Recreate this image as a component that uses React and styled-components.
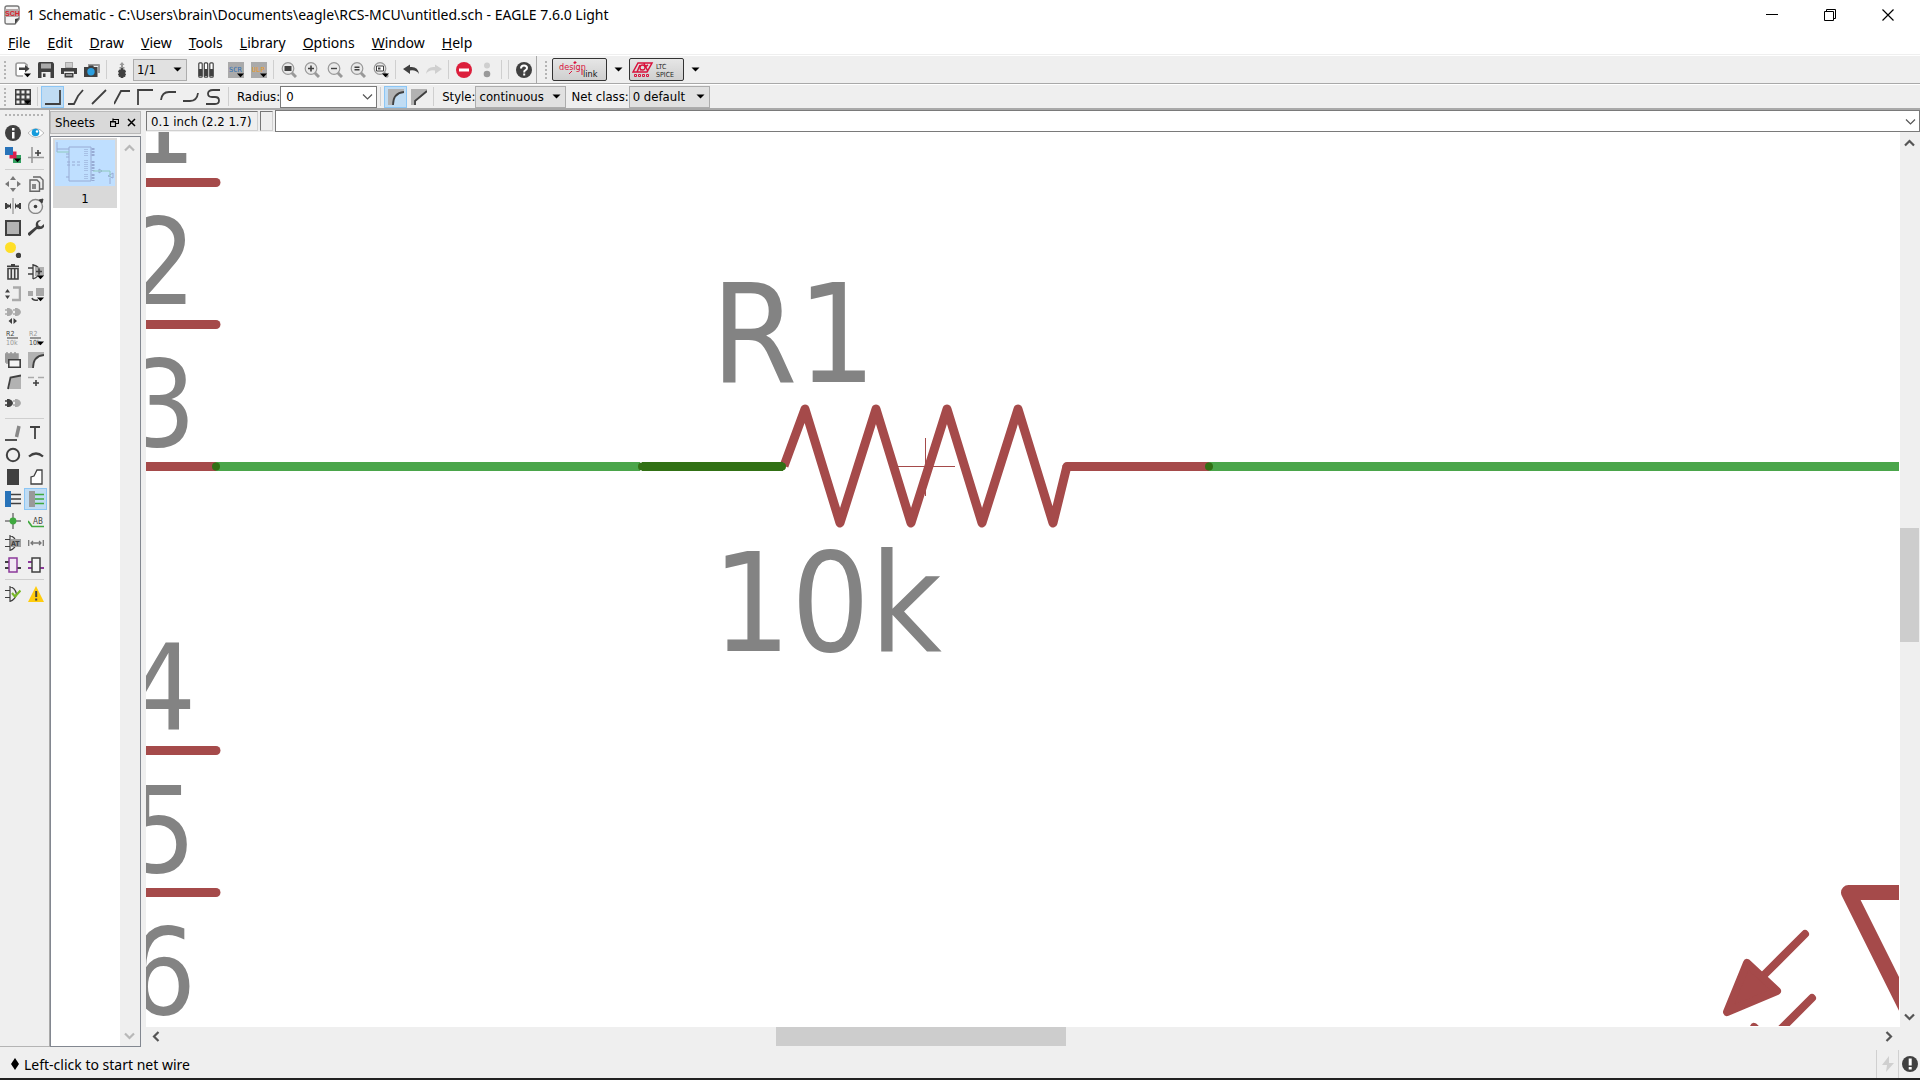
import React from "react";
import styled, { createGlobalStyle } from "styled-components";

const UI_FONT = `"Noto Sans", "Open Sans", sans-serif`;
const TOOL_FONT = `"DejaVu Sans Condensed", "DejaVu Sans", sans-serif`;
const INK = "#404040";
const MID = "#999999";
const RED = "#a54a4a";
const NET = "#4aa54a";
const PIN = "#317014";

const GlobalStyle = createGlobalStyle`
  *, *::before, *::after { box-sizing: border-box; }
  html, body, #root { height: 100%; }
  body { margin: 0; background: #efefef; color: #000; font-family: ${UI_FONT}; overflow: hidden; }
  button, input, select { font: inherit; color: inherit; margin: 0; }
`;

const Window = styled.div`
  display: flex;
  flex-direction: column;
  height: 100vh;
  background: #efefef;
`;

const TitleBar = styled.header`
  display: flex;
  align-items: center;
  height: 29px;
  padding-left: 4px;
  gap: 7px;
  background: #fff;
  font-size: 14px;
  flex: none;
`;

const TitleText = styled.h1`
  margin: 0;
  flex: 1;
  font-size: 14px;
  font-weight: 400;
  white-space: nowrap;
`;

const CaptionButtons = styled.div`
  display: flex;
  padding-right: 3px;
`;

const CaptionButton = styled.button`
  display: grid;
  place-items: center;
  width: 58px;
  height: 29px;
  padding: 0;
  border: 0;
  background: none;
`;

const MenuBar = styled.nav`
  display: flex;
  align-items: center;
  gap: 1px;
  height: 26px;
  background: #fff;
  border-bottom: 1px solid #efefef;
  flex: none;
`;

const MenuItem = styled.button`
  height: 25px;
  padding: 2px 8px 0;
  border: 0;
  background: none;
  font-size: 14px;
  line-height: 23px;
`;

const Toolbar = styled.div`
  display: flex;
  align-items: center;
  height: ${(p) => p.$height}px;
  border-top: 1px solid #fff;
  border-bottom: ${(p) => (p.$last ? 2 : 1)}px solid #a9a9a9;
  font-family: ${TOOL_FONT};
  font-size: 13px;
  flex: none;
`;

const Grip = styled.span`
  width: 11px;
  height: 20px;
  flex: none;
  background: radial-gradient(circle, #b4b4b4 1px, transparent 1px) 2px 0 / 6px 4px repeat-y;
`;

const Separator = styled.span`
  width: 7px;
  height: 19px;
  flex: none;
  background: linear-gradient(${(p) => (p.$blank ? "transparent, transparent" : "#cfcfcf, #cfcfcf")}) center / 1px 100% no-repeat;
`;

const BarEdge = styled.span`
  width: 1px;
  height: 100%;
  background: #a9a9a9;
  margin: 0 4px 0 1px;
`;

const ToolButton = styled.button`
  display: grid;
  place-items: center;
  width: 23px;
  height: 22px;
  padding: 0;
  flex: none;
  border: 1px solid ${(p) => (p.$on ? "#8cc6f5" : "transparent")};
  background: ${(p) => (p.$on ? "#c0dcf3" : "transparent")};
`;

const FieldLabel = styled.label`
  padding-left: 5px;
  white-space: nowrap;
`;

const SelectBox = styled.span`
  display: grid;
  align-items: center;
  width: ${(p) => p.$width}px;
  height: 22px;
  flex: none;
  > * { grid-area: 1 / 1; }
  > svg { justify-self: end; margin-right: 5px; pointer-events: none; }
`;

const Select = styled.select`
  appearance: none;
  width: 100%;
  height: 22px;
  padding: 0 3px;
  border: 1px solid #adadad;
  border-radius: 0;
  background: #e1e1e1;
`;

const ComboBox = styled.span`
  display: flex;
  align-items: center;
  width: ${(p) => (p.$width ? p.$width + "px" : "auto")};
  flex: ${(p) => (p.$width ? "none" : 1)};
  height: 22px;
  border: 1px solid #7a7a7a;
  background: #fff;
`;

const ComboInput = styled.input`
  flex: 1;
  min-width: 0;
  height: 20px;
  padding: 0 5px;
  border: 0;
  background: none;
  outline: 0;
`;

const ComboArrow = styled.button`
  display: grid;
  place-items: center;
  width: 17px;
  height: 20px;
  padding: 0;
  border: 0;
  background: none;
`;

const BrandButton = styled.button`
  display: grid;
  place-items: center;
  width: 55px;
  height: 23px;
  padding: 0;
  border: 1px solid #333;
  border-radius: 2px;
  background: linear-gradient(#e6e6e6, #cfcfcf);
`;

const BrandArrow = styled.button`
  display: grid;
  place-items: center;
  width: 22px;
  height: 22px;
  padding: 0;
  border: 0;
  background: none;
`;

const Workspace = styled.div`
  display: flex;
  flex: 1;
  min-height: 0;
`;

const Palette = styled.aside`
  width: 50px;
  flex: none;
  border-right: 1px solid #a9a9a9;
  border-bottom: 1px solid #b4b4b4;
  padding: 3px 1px 0;
`;

const PaletteGrip = styled.div`
  height: 9px;
  margin: 0 3px;
  background: radial-gradient(circle, #b4b4b4 1px, transparent 1px) 0 0 / 4px 4px repeat-x;
`;

const PaletteGroup = styled.div`
  display: grid;
  grid-template-columns: 23px 23px;
  grid-auto-rows: 22px;
`;

const PaletteRule = styled.hr`
  height: 1px;
  margin: 3px 4px;
  border: 0;
  background: #cfcfcf;
`;

const Dock = styled.section`
  display: flex;
  flex-direction: column;
  gap: 2px;
  width: 91px;
  margin-right: 5px;
  padding-top: 1px;
  flex: none;
`;

const DockHeader = styled.header`
  display: flex;
  align-items: center;
  height: 23px;
  padding: 0 4px;
  border: 1px solid #b9b9b9;
  background: #d9d9d9;
  font-family: ${TOOL_FONT};
  font-size: 13px;
`;

const DockTitle = styled.h2`
  flex: 1;
  margin: 0;
  font-size: 13px;
  font-weight: 400;
`;

const DockButton = styled.button`
  display: grid;
  place-items: center;
  width: 17px;
  height: 17px;
  padding: 0;
  border: 0;
  background: none;
  &:last-child { margin-right: -4px; }
`;

const SheetPane = styled.div`
  display: flex;
  flex: 1;
  min-height: 0;
  border: 1px solid #828790;
  background: #fff;
`;

const SheetList = styled.ul`
  flex: 1;
  margin: 0;
  padding: 1px 2px;
  list-style: none;
`;

const SheetItem = styled.li`
  display: flex;
  flex-direction: column;
  align-items: center;
  gap: 4px;
  width: 64px;
  height: 70px;
  padding-top: 2px;
  background: #d9d9d9;
  font-family: ${TOOL_FONT};
  font-size: 13px;
  line-height: 18px;
`;

const ScrollTrack = styled.div`
  display: flex;
  flex-direction: ${(p) => (p.$across ? "row" : "column")};
  justify-content: space-between;
  ${(p) => (p.$across ? "height: 20px;" : "width: 20px;")}
  padding: ${(p) => (p.$across ? "0 1px" : "2px 0")};
  flex: none;
  background: #efefef;
`;

const ScrollArrow = styled.button`
  display: grid;
  place-items: center;
  width: 18px;
  height: 18px;
  padding: 0;
  border: 0;
  background: none;
  flex: none;
`;

const ScrollSpace = styled.div`
  flex: ${(p) => p.$grow};
`;

const ScrollThumb = styled.div`
  flex: ${(p) => p.$grow};
  background: #cdcdcd;
  margin: ${(p) => (p.$across ? "0 0 1px" : "0 1px 0 0")};
`;

const Editor = styled.main`
  display: flex;
  flex-direction: column;
  flex: 1;
  min-width: 0;
`;

const CommandRow = styled.div`
  display: flex;
  height: 22px;
  gap: 2px;
  flex: none;
  font-family: ${TOOL_FONT};
  font-size: 13px;
`;

const Readout = styled.output`
  width: ${(p) => p.$width}px;
  height: 20px;
  margin-top: 1px;
  padding-left: 4px;
  border: 1px solid #d0d0d0;
  border-top: 1px solid #777;
  border-left: 1px solid #777;
  line-height: 19px;
  white-space: nowrap;
`;

const CanvasArea = styled.div`
  display: flex;
  flex: 1;
  min-height: 0;
`;

const Drawing = styled.svg`
  flex: 1;
  min-width: 0;
  height: 100%;
  border: solid #fff;
  border-width: 0 1px 1px 0;
  background: #fff;
  overflow: hidden;
`;

const StatusBar = styled.footer`
  display: flex;
  align-items: center;
  height: 31px;
  padding: 3px 0 0 9px;
  flex: none;
  font-size: 14px;
`;

const StatusText = styled.span`
  flex: 1;
  display: flex;
  align-items: center;
  gap: 3px;
`;

const StatusCell = styled.span`
  display: grid;
  place-items: center;
  width: 22px;
  height: 28px;
  border-left: 1px solid #d0d0d0;
`;

const BottomEdge = styled.div`
  height: 2px;
  background: #222;
  flex: none;
`;

const Drop = () => <path d="M9 11.500h7l-3.500 3.800z" fill="#000" />;
const s = { fill: "none", stroke: INK, strokeWidth: 1.8 };

const Lens = ({ children }) => (
  <>
    <path d="M10.500 10.500l4.500 4.500" stroke={MID} strokeWidth="3" />
    <circle cx="7" cy="6.500" r="5.800" fill="#e9e9e9" stroke={MID} strokeWidth="1.200" />
    {children}
  </>
);
const Gate = ({ x = 0, fill = INK, y = 8 }) => (
  <path transform={`translate(${x} ${y - 4})`} d="M2 0h2q3.500 1 4 4q-.5 3-4 4h-2zM0 1.200h2v1.600H0zM0 5.200h2v1.600H0z" fill={fill} />
);

const icons = {
  open: <><path d="M12 5V3L9.500 1H3Q1 1 1 3v9q0 2 2 2h5" fill="#fff" stroke={MID} strokeWidth="1.600" /><path d="M4 5.500h6V3l4.500 3.800L10 10.500V8H4z" fill={INK} /><Drop /></>,
  save: <><path d="M0 1.500Q0 0 1.500 0h13L16 1.500V16H0z" fill={INK} /><path d="M3 1.500h10v5H3z" fill="#aaa" /><path d="M3.500 10h9v6h-9z" fill="#eee" /><path d="M5 11.500h2.500V15H5z" fill={INK} /></>,
  print: <><path d="M4 0h8v6H4z" fill="#aaa" /><path d="M5 2h6M5 4h6" stroke="#eee" /><path d="M0 6h16v6h-3V9.500H3V12H0z" fill={INK} /><path d="M3.500 11h9v4.500h-9z" fill={INK} /><path d="M5 13h6" stroke="#eee" /></>,
  camera: <><path d="M4 2h11q1 0 1 1v8h-2V4H4z" fill={MID} /><path d="M0 5h4l1-1.500h4L10 5h3.500v10H0z" fill={INK} /><circle cx="7" cy="9.800" r="3.700" fill="#2b9fe0" /></>,
  sheetNav: <><path d="M5.500 3h5L8 0zM7 3h2v3H7zM5.500 5h5v1.500h-5z" fill={MID} /><path d="M5 8h6v6.500H5zM7 6.500h2V16H7zM4 9.500h8M4 12.500h8" fill={INK} stroke={INK} strokeWidth=".8" /></>,
  tubes: <>{[0.8, 6.3, 11.8].map((x) => <g key={x}><rect x={x} y=".8" width="3.400" height="14.400" rx="1" fill="#fff" stroke={INK} strokeWidth="1.200" /><path d={`M${x} 7h3.400v7H${x}z`} fill={INK} /></g>)}</>,
  scr: <><path d="M0 0h16v16H0z" fill="#aaa" /><text x="1" y="10" fontSize="7" fontFamily="DejaVu Sans Mono" fill="#2d6fb4">SCR</text><Drop /></>,
  ulp: <><path d="M0 0h16v16H0z" fill="#aaa" /><text x="1" y="10" fontSize="7" fontFamily="DejaVu Sans Mono" fill="#ef9a20">ULP</text><Drop /></>,
  zoomFit: <Lens><path d="M3.500 4h7v5h-7z" fill={INK} /></Lens>,
  zoomIn: <Lens><path d="M4 6.500h6M7 3.500v6" stroke={INK} strokeWidth="1.600" /></Lens>,
  zoomOut: <Lens><path d="M4 6.500h6" stroke={INK} strokeWidth="1.400" /></Lens>,
  redraw: <Lens><path d="M4.500 5.200h5M4.500 7.800h5" stroke={INK} strokeWidth="1.400" /></Lens>,
  zoomSelect: <><Lens><path d="M3.500 4h7v5h-7z" fill="#fff" stroke={INK} /><path d="M5 5.500h2.500v2H5z" fill={INK} /></Lens><Drop /></>,
  undo: <path d="M0 7l7-4.500V5q8-1 9 7q-3-4.500-9-3.500V12z" fill={INK} />,
  redo: <path d="M16 7L9 2.500V5Q1 4 0 12q3-4.500 9-3.500V12z" fill="#cfcfcf" />,
  stop: <><circle cx="8" cy="8" r="8" fill="#dc1f3c" /><path d="M3 6.500h10v3H3z" fill="#fff" /></>,
  go: <><circle cx="8" cy="3.500" r="3" fill="#cfcfcf" /><circle cx="8" cy="12" r="3.300" fill="#999" /></>,
  help: <><circle cx="8" cy="8" r="8" fill={INK} /><path d="M5 6.500q0-3 3-3t3 2.500q0 1.500-1.500 2.200T8.200 10.500" fill="none" stroke="#fff" strokeWidth="2" /><path d="M7.200 11.500h2v2h-2z" fill="#fff" /></>,
  grid: <><path d="M0 0h16v16H0z" fill={INK} /><path d="M1.500 1.500h3v3h-3zM6.500 1.500h3v3h-3zM11.500 1.500h3v3h-3zM1.500 6.500h3v3h-3zM6.500 6.500h3v3h-3zM11.500 6.500h3v3h-3zM1.500 11.500h3v3h-3zM6.500 11.500h3v3h-3z" fill="#eee" /><Drop /></>,
  bend0: <path {...s} d="M0 15h15V1" />,
  bend1: <path {...s} d="M0 15h6L10 7l5-6" />,
  bend2: <path {...s} d="M1 15L15 1" />,
  bend3: <path {...s} d="M0 15L7 2h9" />,
  bend4: <path {...s} d="M1 16V1h15" />,
  bend5: <path {...s} d="M1 11Q2 3 9 3h7" />,
  bend6: <path {...s} d="M0 12h7q7 0 8-8" />,
  bend7: <path {...s} d="M14 1H7Q2 1 2 4.500T6 8h3q4 0 4 3.500T9 15H0" />,
  miterRound: <><path d="M0 0h16v3Q5 4 4 16H0z" fill="#b2b2b2" /><path {...s} d="M5 16Q5 4 16 3" /></>,
  miterCut: <><path d="M0 0h16v3L5 12v4H0z" fill="#b2b2b2" /><path {...s} d="M4 16v-4L16 2" /></>,
  info: <><circle cx="8" cy="8" r="8" fill={INK} /><path d="M7 7h2.500v6.500H7zM7 3h2.500v2.500H7z" fill="#fff" /></>,
  show: <><path d="M0 8q8-9 16 0q-8 9-16 0z" fill="#fff" stroke="#bbb" /><circle cx="7.500" cy="7.500" r="3.800" fill="#149bdc" /><circle cx="9" cy="6.500" r="1.200" fill="#fff" /></>,
  layers: <><path d="M8 8h8v8H8z" fill="#32a060" /><path d="M4.500 4.500h7v7h-7z" fill="#dc1f50" /><path d="M0 0h8v8H0z" fill="#2873b9" /><Drop /></>,
  mark: <><path d="M4 0v16M0 10.500h16" stroke={MID} strokeWidth="1.600" /><path d="M7 6h6M10 3v6" stroke={INK} strokeWidth="1.600" /></>,
  move: <path d="M8 0l3 4H5zM8 16l3-4H5zM0 8l4-3v6zM16 8l-4-3v6z" fill="#777" />,
  copy: <><path d="M5 1h7l3 3v9h-3M2 4h7l2.500 2.500V15.300H2z" fill="#eee" stroke="#666" strokeWidth="1.400" /><path d="M4 8h4v5H4z" fill="#888" /></>,
  mirror: <><path d="M8 0v16" stroke={MID} strokeWidth="1.300" /><path d="M0 5h2v1l3 1V5.500h1v5H5V9l-3 1v1H0zM16 5h-2v1l-3 1V5.500h-1v5h1V9l3 1v1h2z" fill={INK} /></>,
  rotate: <><circle cx="7.500" cy="8.500" r="7" fill="none" stroke="#888" strokeWidth="1.400" /><circle cx="7.500" cy="8.500" r="1.800" fill={INK} /><path d="M11 2l4-1-1 4z" fill={INK} stroke={INK} /></>,
  group: <path d="M1 1h14v14H1z" fill="#b2b2b2" stroke={INK} strokeWidth="2" />,
  change: <path d="M16 4l-3 2.500-2.500-1L10 3l3-3Q9 0 8 3q-.5 2 0 3.500L0 13q-.5 2 1.500 3L9 9q5 1 7-2z" fill={INK} />,
  paste: <><circle cx="5.500" cy="5.500" r="5.500" fill="#ffdf28" /><circle cx="13.500" cy="13.500" r="2.700" fill={INK} /></>,
  trash: <><path d="M2 3V1.500h4V0h4v1.500h4V3z" fill={INK} /><path d="M3 4.500h10V15H3zM6.300 5v10M9.700 5v10" fill="#eee" stroke={INK} strokeWidth="1.600" /></>,
  add: <><path d="M0 4h5M0 10h5M5 0v15M5 1q6 1 7 6.500Q11 13 5 15" fill="none" stroke={INK} strokeWidth="1.300" /><path d="M7 3h9v9H7z" fill="#a0a0a0" opacity=".8" /><path d="M8 7.500h6M11 4.500v6" stroke={INK} strokeWidth="1.500" /><Drop /></>,
  pinswap: <><path d="M0 6.500L2.500 3 5 6.500zM0 9.500L2.500 13 5 9.500z" fill={INK} /><path d="M8 1.500h7V14H7" fill="none" stroke="#aaa" strokeWidth="2.500" /></>,
  gateswap: <><path d="M0 5h5v5H0zM8 2h8v8H8z" fill="#a8a8a8" /><path d="M4 12q1 3 6 2" fill="none" stroke={INK} strokeWidth="1.500" /><Drop /></>,
  replace: <><Gate fill="#aaa" y={4} /><Gate x={8} fill="#aaa" y={4} /><path d="M3.500 13L7 10v6zM12 13L8.500 10v6z" fill={INK} /></>,
  name: <><text x="1" y="6" fontSize="7" fontFamily="DejaVu Sans Condensed" fill={INK}>R2</text><path d="M2 8h11" stroke="#777" strokeWidth="1.500" /><text x="1" y="15" fontSize="7" fontFamily="DejaVu Sans Condensed" fill="#999">10k</text></>,
  value: <><text x="1" y="6" fontSize="7" fontFamily="DejaVu Sans Condensed" fill="#999">R2</text><path d="M2 8h11" stroke="#777" strokeWidth="1.500" /><text x="1" y="15" fontSize="7" fontFamily="DejaVu Sans Condensed" fill={INK}>10k</text><Drop /></>,
  smash: <><path d="M0 2h13v8H0zM2 0v12M6 0v12M10 0v12" fill="#999" stroke="#999" strokeWidth="1.500" /><path d="M3.800 7.800h11.400v7.400H3.800z" fill="#f4f4f4" stroke={INK} strokeWidth="1.600" /></>,
  miter: <><path d="M0 0h16v3Q5 4 4 16H0z" fill="#b2b2b2" /><path {...s} d="M5 16Q5 4 16 3" /></>,
  split: <><path d="M4 15L6 4l10-3v14z" fill="#b2b2b2" /><path {...s} d="M3 15L5.500 3.500 16 1.500" /></>,
  invoke: <><path d="M0 3.500h6M10 3.500h6" stroke="#aaa" strokeWidth="1.400" /><path d="M5 9h6M8 6v6" stroke={INK} strokeWidth="1.600" /></>,
  gates: <><Gate y={7} /><Gate x={8} fill="#aaa" y={7} /></>,
  wire: <><path d="M0 15h12" stroke={INK} strokeWidth="1.800" /><path d="M14 1l-2.500 11" stroke="#888" strokeWidth="3.500" /></>,
  text: <path d="M2 2h10M7 2v12" fill="none" stroke={INK} strokeWidth="1.800" />,
  circle: <circle cx="8" cy="8" r="6.200" {...s} strokeWidth="2" />,
  arc: <path {...s} strokeWidth="2.300" d="M1 9.500q7-6 14 0" />,
  rect: <path d="M2 0h12v16H2z" fill={INK} />,
  polygon: <path d="M3 15V8l3-1 3-6h5v14z" fill="#fff" stroke={INK} strokeWidth="1.300" />,
  bus: <><path d="M0 0h6v16H0z" fill="#2873b9" /><path d="M6 3.500h10M6 8h10M6 12.500h10" stroke={INK} strokeWidth="1.500" /></>,
  net: <><path d="M1 0h6v16H1z" fill="#999" /><path d="M7 3.500h9M7 8h9M7 12.500h9" stroke="#3fa93f" strokeWidth="1.700" /></>,
  junction: <><path d="M0 8h16M8 0v16" stroke="#777" strokeWidth="1.500" /><circle cx="8" cy="8" r="3.400" fill="#3fa93f" /></>,
  label: <><path d="M0 8l4 5.500h12" fill="none" stroke="#3fa93f" strokeWidth="1.700" /><text x="5" y="10.500" fontSize="8" fontFamily="DejaVu Sans Condensed" fill={INK}>AB</text></>,
  attribute: <><path d="M0 4.500h5M0 11.500h5M5 0v16M5 .7q5 1 6.500 7.300Q10 14 5 15.300" fill="none" stroke={INK} strokeWidth="1.200" /><path d="M6 4h10v8H6z" fill="#a0a0a0" /><text x="6" y="11" fontSize="7" fontFamily="DejaVu Sans Condensed" fontWeight="700" fill={INK}>AT</text></>,
  dimension: <path d="M.7 5v6M15.300 5v6M3 8h10M5 6L3 8l2 2M11 6l2 2-2 2" fill="none" stroke="#777" strokeWidth="1.300" />,
  module: <><path d="M0 5h4M0 11h4M12 11h4" stroke={INK} strokeWidth="1.800" /><path d="M4 1h8v14H4z" fill="#f2e8f4" stroke="#8c3a9a" strokeWidth="1.500" /></>,
  port: <><path d="M0 5h4M0 11h4M12 11h4" stroke="#8c3a9a" strokeWidth="1.800" /><path d="M4 1h8v14H4z" fill="#f4f4f4" stroke={INK} strokeWidth="1.500" /></>,
  erc: <><path d="M0 4.500h5M0 11.500h5M5 0v16M5 .7q5 1 6.500 7.300Q10 14 5 15.300" fill="none" stroke={INK} strokeWidth="1.200" /><path d="M7 7l3 3.500 5.500-6" fill="none" stroke="#79b829" strokeWidth="2.200" /></>,
  errors: <><path d="M8 0l8 16H0z" fill="#ffcc0d" /><path d="M7.200 5h2v6h-2zM7.200 12.500h2v2h-2z" fill={INK} /></>,
  bolt: <path d="M9 0L2 9h5l-1 7 8-9H9z" fill="#cfcfcf" />,
  alert: <><circle cx="8" cy="8" r="8" fill={INK} /><path d="M6.700 2.500h3v7h-3zM6.700 11h3v2.500h-3z" fill="#fff" /></>,
};

const Icon = ({ name }) => (
  <svg width="16" height="16" viewBox="0 0 16 16" aria-hidden="true">{icons[name]}</svg>
);
const Tool = ({ name, on }) => (
  <ToolButton type="button" aria-label={name} $on={on}><Icon name={name} /></ToolButton>
);
const Caret = () => (
  <svg width="9" height="5" viewBox="0 0 9 5" aria-hidden="true"><path d="M.500.500h8l-4 4z" fill="#000" /></svg>
);

const turns = { down: 0, left: 90, up: 180, right: 270 };
const Chevron = ({ to = "down", color = "#555", weight = 2.2 }) => (
  <svg width="11" height="11" viewBox="0 0 11 11" aria-hidden="true">
    <path transform={`rotate(${turns[to]} 5.500 5.500)`} d="M1 3.500l4.500 4.500L10 3.500" fill="none" stroke={color} strokeWidth={weight} />
  </svg>
);

const DropDown = ({ id, width, value, label }) => (
  <SelectBox $width={width}>
    <Select id={id} aria-label={label} defaultValue={value}><option>{value}</option></Select>
    <Caret />
  </SelectBox>
);

const menus = ["File", "Edit", "Draw", "View", "Tools", "Library", "Options", "Window", "Help"];
const actionGroups = [
  ["scr", "ulp"],
  ["zoomFit", "zoomIn", "zoomOut", "redraw", "zoomSelect"],
  ["undo", "redo"],
  ["stop", "go"],
];
const bends = ["bend0", "bend1", "bend2", "bend3", "bend4", "bend5", "bend6", "bend7"];
const paletteGroups = [
  ["info", "show", "layers", "mark"],
  ["move", "copy", "mirror", "rotate", "group", "change", "paste", null, "trash", "add", "pinswap", "gateswap",
    "replace", null, "name", "value", "smash", "miter", "split", "invoke", "gates", null],
  ["wire", "text", "circle", "arc", "rect", "polygon", "bus", "net", "junction", "label", "attribute", "dimension", "module", "port"],
  ["erc", "errors"],
];
const pinNumbers = [["1", 163], ["2", 304], ["3", 446], ["4", 730], ["5", 872], ["6", 1014]];
const pinLines = [182, 324, 750, 892];

const LedArrow = ({ x, y }) => (
  <g transform={`translate(${x} ${y})`} stroke={RED} strokeWidth="8" strokeLinecap="round" strokeLinejoin="round">
    <path d="M1805 934L1764 975" />
    <path d="M1747 963L1777 991L1727 1012Z" fill={RED} />
  </g>
);

const Schematic = () => (
  <Drawing role="img" aria-label="Schematic sheet 1">
    <g transform="translate(-146 -132)" fill="none">
      <g fill="#838383" fontFamily={TOOL_FONT}>
        <g fontSize="119">
          {pinNumbers.map(([n, y]) => <text key={n} x="128" y={y}>{n}</text>)}
        </g>
        <g fontSize="138">
          <text x="711" y="382">R1</text>
          <text x="712" y="651">10k</text>
        </g>
      </g>
      <g stroke={RED} strokeWidth="9" strokeLinecap="round">
        {pinLines.map((y) => <path key={y} d={`M130 ${y}.500H216`} />)}
        <path d="M130 466.500H216M1067 466.500H1209" />
      </g>
      <path d="M784 466L805 409L840 523L876 409L911 523L947 409L982 523L1018 409L1053 523L1067 466" stroke={RED} strokeWidth="9" strokeLinejoin="round" />
      <path d="M216 466.500H640M1209 466.500H2400" stroke={NET} strokeWidth="9" />
      <path d="M642 466.500H782M216 466.500h.01M1209 466.500h.01" stroke={PIN} strokeWidth="8" strokeLinecap="round" />
      <path d="M642 466.500H783" stroke={PIN} strokeWidth="9" />
      <path d="M898 466.500H955M925.500 438V496" stroke={RED} />
      <path d="M2000 892.500H1848.500L1920 1036" stroke={RED} strokeWidth="15" strokeLinejoin="round" />
      <LedArrow x={0} y={0} />
      <LedArrow x={7} y={64} />
    </g>
  </Drawing>
);

const SheetThumb = () => (
  <svg width="60" height="46" viewBox="0 0 60 46" aria-hidden="true">
    <path d="M0 0h60v46H0z" fill="#bfdfff" />
    <g fill="none" stroke="#98abd4">
      <path d="M14 7h22v34H14zM2 2v10M2 9h12M11 14h3M11 17h3M11 37h3" />
      <path d="M12 22h14M12 25h14" strokeDasharray="3 2" />
      <path d="M38 8v8M38 21v10M38 34v7" strokeWidth="3" strokeDasharray="2 1" />
      <path d="M31 9v8M31 20v11M31 34v6" strokeWidth="4" strokeDasharray="1 1" opacity=".6" />
      <path d="M44 29l3 2-3 2zM53 36l5-3v5zM55 38v6" />
    </g>
    <path d="M2 12h12M38 31h17v6" fill="none" stroke="#8fc9be" />
  </svg>
);

export default function App() {
  return (
    <>
      <GlobalStyle />
      <Window>
        <TitleBar>
          <svg width="16" height="20" viewBox="0 0 16 20" aria-hidden="true">
            <path d="M1 3Q1 1 3 1h10q2 0 2 2v11l-4 5H3q-2 0-2-2z" fill="#f4f4f4" stroke="#777" strokeWidth="1.400" />
            <path d="M15 13l-4 6v-5z" fill={INK} />
            <path d="M1 4h14v8H1z" fill="#b5a8a8" />
            <text x="1" y="11" fontSize="7" fontWeight="700" fontFamily="Liberation Sans" fill="#d8222e">SCH</text>
          </svg>
          <TitleText>1 Schematic - C:\Users\brain\Documents\eagle\RCS-MCU\untitled.sch - EAGLE 7.6.0 Light</TitleText>
          <CaptionButtons>
            <CaptionButton aria-label="Minimize"><svg width="12" height="12"><path d="M0 5.500h12" stroke="#000" /></svg></CaptionButton>
            <CaptionButton aria-label="Restore"><svg width="12" height="12"><path d="M.500 2.500h9v9h-9zM2.500 2.500v-2h9v9h-2" fill="none" stroke="#000" /></svg></CaptionButton>
            <CaptionButton aria-label="Close"><svg width="12" height="12"><path d="M.500.500l11 11M11.500.500l-11 11" stroke="#000" strokeWidth="1.200" /></svg></CaptionButton>
          </CaptionButtons>
        </TitleBar>
        <MenuBar>{menus.map((m) => <MenuItem key={m} type="button"><u>{m[0]}</u>{m.slice(1)}</MenuItem>)}</MenuBar>

        <Toolbar $height={29}>
          <Grip />
          <Tool name="open" /><Tool name="save" /><Tool name="print" /><Tool name="camera" />
          <Separator />
          <Tool name="sheetNav" />
          <DropDown width={54} value="1/1" label="Sheet" />
          <Separator $blank />
          <Tool name="tubes" />
          <Separator $blank />
          {actionGroups.map((group) => (
            <React.Fragment key={group[0]}>
              {group.map((n) => <Tool key={n} name={n} />)}
              <Separator />
            </React.Fragment>
          ))}
          <Separator />
          <Tool name="help" />
          <BarEdge />
          <Grip />
          <BrandButton type="button" aria-label="design link">
            <svg width="45" height="18" viewBox="0 0 45 18">
              <g fontFamily={TOOL_FONT} fontSize="9">
                <text x="2" y="9" fill="#d8123c">design</text>
                <text x="26" y="16" fill="#111">link</text>
              </g>
              <path d="M18 0v3M16.500 1.500h3M12 13l3-3M25 8v6" stroke="#d8123c" fill="none" />
            </svg>
          </BrandButton>
          <BrandArrow type="button" aria-label="design link options"><Caret /></BrandArrow>
          <BrandButton type="button" aria-label="LTC SPICE">
            <svg width="49" height="18" viewBox="0 0 49 18">
              <path d="M1 11L6 2h14l-5 9zM5 11l3-7M12 2.500l4 8M8 9l8-5" fill="none" stroke="#d8123c" strokeWidth="1.500" />
              <circle cx="10.500" cy="6.500" r="2.500" fill="#ddd" stroke="#d8123c" strokeWidth="1.300" />
              <path d="M2.500 13.500h2v2h-2zM6.500 13.500h2v2h-2zM10.500 13.500h2v2h-2zM14.500 13.500h2v2h-2z" fill="none" stroke="#d8123c" />
              <g fontFamily={TOOL_FONT} fontSize="7" fill="#222">
                <text x="24" y="8">LTC</text>
                <text x="24" y="16">SPICE</text>
              </g>
            </svg>
          </BrandButton>
          <BrandArrow type="button" aria-label="LTC SPICE options"><Caret /></BrandArrow>
        </Toolbar>

        <Toolbar $height={26} $last>
          <Grip />
          <Tool name="grid" />
          <Separator />
          {bends.map((n, i) => <Tool key={n} name={n} on={i === 0} />)}
          <Separator />
          <FieldLabel htmlFor="radius">Radius:</FieldLabel>
          <ComboBox $width={97}>
            <ComboInput id="radius" defaultValue="0" />
            <ComboArrow type="button" aria-label="Radius values"><Chevron weight={1.2} /></ComboArrow>
          </ComboBox>
          <Separator />
          <Tool name="miterRound" on /><Tool name="miterCut" />
          <Separator />
          <FieldLabel htmlFor="style">Style:</FieldLabel>
          <DropDown id="style" width={91} value="continuous" />
          <FieldLabel htmlFor="netclass">Net class:</FieldLabel>
          <DropDown id="netclass" width={81} value="0 default" />
        </Toolbar>

        <Workspace>
          <Palette>
            <PaletteGrip />
            {paletteGroups.map((group, g) => (
              <React.Fragment key={g}>
                {g > 0 && <PaletteRule />}
                <PaletteGroup>
                  {group.map((n, i) => (n ? <Tool key={n} name={n} on={n === "net"} /> : <span key={i} />))}
                </PaletteGroup>
              </React.Fragment>
            ))}
          </Palette>

          <Dock>
            <DockHeader>
              <DockTitle>Sheets</DockTitle>
              <DockButton type="button" aria-label="Float"><svg width="9" height="9"><path d="M3 1.500h5.500v4H6M.500 3.500h5v5h-5zM0 4h6M3 .500v3" fill="none" stroke="#000" strokeWidth="1.200" /></svg></DockButton>
              <DockButton type="button" aria-label="Close"><svg width="9" height="9"><path d="M1 1l7 7M8 1L1 8" stroke="#000" strokeWidth="1.500" /></svg></DockButton>
            </DockHeader>
            <SheetPane>
              <SheetList><SheetItem><SheetThumb /><span>1</span></SheetItem></SheetList>
              <ScrollTrack>
                <ScrollArrow type="button" aria-label="Scroll up"><Chevron to="up" color="#b8b8b8" /></ScrollArrow>
                <ScrollArrow type="button" aria-label="Scroll down"><Chevron color="#b8b8b8" /></ScrollArrow>
              </ScrollTrack>
            </SheetPane>
          </Dock>

          <Editor>
            <CommandRow>
              <Readout $width={112}>0.1 inch (2.2 1.7)</Readout>
              <Readout $width={13} />
              <ComboBox>
                <ComboInput aria-label="Command" />
                <ComboArrow type="button" aria-label="Command history"><Chevron weight={1.2} /></ComboArrow>
              </ComboBox>
            </CommandRow>
            <CanvasArea>
              <Schematic />
              <ScrollTrack>
                <ScrollArrow type="button" aria-label="Scroll up"><Chevron to="up" /></ScrollArrow>
                <ScrollSpace $grow={376} />
                <ScrollThumb $grow={114} />
                <ScrollSpace $grow={365} />
                <ScrollArrow type="button" aria-label="Scroll down"><Chevron /></ScrollArrow>
              </ScrollTrack>
            </CanvasArea>
            <ScrollTrack $across>
              <ScrollArrow type="button" aria-label="Scroll left"><Chevron to="left" /></ScrollArrow>
              <ScrollSpace $grow={611} />
              <ScrollThumb $across $grow={290} />
              <ScrollSpace $grow={813} />
              <ScrollArrow type="button" aria-label="Scroll right"><Chevron to="right" /></ScrollArrow>
              <ScrollSpace $grow={22} />
            </ScrollTrack>
          </Editor>
        </Workspace>

        <StatusBar>
          <StatusText>
            <svg width="12" height="12" viewBox="0 0 12 12" aria-hidden="true"><path d="M6 0l4 6-4 6-4-6z" fill="#000" /></svg>
            Left-click to start net wire
          </StatusText>
          <StatusCell><Icon name="bolt" /></StatusCell>
          <StatusCell><Icon name="alert" /></StatusCell>
        </StatusBar>
        <BottomEdge />
      </Window>
    </>
  );
}
